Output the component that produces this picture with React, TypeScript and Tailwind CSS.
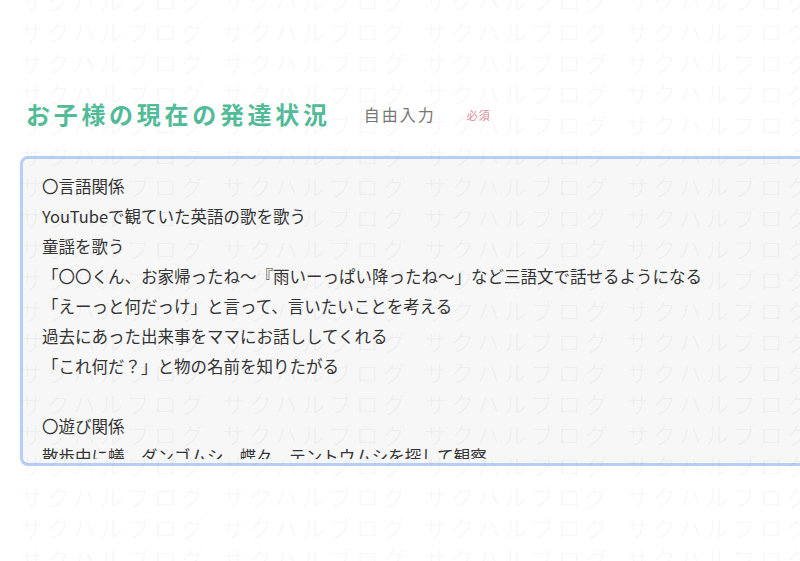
const LINES = [
  '〇言語関係',
  'YouTubeで観ていた英語の歌を歌う',
  '童謡を歌う',
  '「〇〇くん、お家帰ったね～『雨いーっぱい降ったね～」など三語文で話せるようになる',
  '「えーっと何だっけ」と言って、言いたいことを考える',
  '過去にあった出来事をママにお話ししてくれる',
  '「これ何だ？」と物の名前を知りたがる',
  '',
  '〇遊び関係',
  '散歩中に蟻、ダンゴムシ、蝶々、テントウムシを探して観察',
];

const ROWS = Array.from({ length: 20 });
const COLS = Array.from({ length: 4 });

function Watermark() {
  return (
    <div className="pointer-events-none absolute left-[20px] top-[-15px] select-none text-[23px] leading-[31px] text-[rgba(0,0,0,0.035)]">
      {ROWS.map((_, r) => (
        <div key={r} className="flex whitespace-nowrap">
          {COLS.map((_, c) => (
            <span key={c} className="w-[202px] shrink-0 tracking-[4px]">
              サクハルブログ
            </span>
          ))}
        </div>
      ))}
    </div>
  );
}

export default function App() {
  return (
    <div
      className="relative h-[561px] w-[800px] overflow-hidden bg-white"
      style={{ fontFamily: '"Noto Sans CJK JP", "Noto Sans", sans-serif' }}
    >
      <div className="pl-[26px] pt-[98px]">
        <div className="flex h-[32px] items-center">
          <h2 className="text-[24px] font-bold leading-[32px] tracking-[3.7px] text-[#52bb98]">
            お子様の現在の発達状況
          </h2>
          <span className="ml-[33px] text-[16px] tracking-[2px] text-[#777777]">自由入力</span>
          <span className="ml-[31px] mt-[3px] text-[11px] tracking-[1px] text-[#d98a91]">必須</span>
        </div>
      </div>

      <div className="ml-[20px] mt-[26px] h-[310px] w-[830px] rounded-[8px] border-[3px] border-[#b5cff6] bg-[#f7f7f7] pb-[4px] pl-[19px] pt-[12px]">
        <div className="h-full overflow-hidden">
          {LINES.map((line, i) => (
            <div key={i} className="h-[30px] whitespace-nowrap text-[16.5px] leading-[30px] text-[#333333]">
              {line}
            </div>
          ))}
        </div>
      </div>

      <Watermark />
    </div>
  );
}
